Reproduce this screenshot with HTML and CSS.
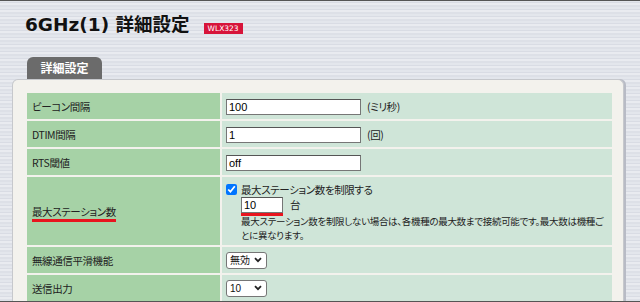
FILE: index.html
```html
<!DOCTYPE html>
<html lang="ja">

<head>
    <meta charset="UTF-8">
    <meta name="viewport" content="width=device-width, initial-scale=1.0">
    <title>6GHz(1) 詳細設定</title>
    <link rel="stylesheet" href="styles.css">
</head>

<body>
    <div class="page">
        <h1 class="title">6GHz(1) 詳細設定 <span class="model">WLX323</span></h1>

        <div class="tabs">
            <span class="tab">詳細設定</span>
        </div>

        <div class="panel">
            <table class="settings">
                <tr>
                    <td class="label">ビーコン間隔</td>
                    <td class="value"><input type="text" class="text" value="100"><span class="unit">(ミリ秒)</span></td>
                </tr>
                <tr>
                    <td class="label">DTIM間隔</td>
                    <td class="value"><input type="text" class="text" value="1"><span class="unit">(回)</span></td>
                </tr>
                <tr>
                    <td class="label">RTS閾値</td>
                    <td class="value"><input type="text" class="text" value="off"></td>
                </tr>
                <tr>
                    <td class="label"><span class="mark">最大ステーション数</span></td>
                    <td class="value value-stack">
                        <label class="check"><input type="checkbox" checked>最大ステーション数を制限する</label>
                        <div class="sub">
                            <div class="count">
                                <span class="mark-input"><input type="text" class="num" value="10"></span>
                                <span>台</span>
                            </div>
                            <p class="note">最大ステーション数を制限しない場合は、各機種の最大数まで接続可能です。最大数は機種ごとに異なります。</p>
                        </div>
                    </td>
                </tr>
                <tr>
                    <td class="label">無線通信平滑機能</td>
                    <td class="value">
                        <select class="pick">
                            <option>無効</option>
                            <option>有効</option>
                        </select>
                    </td>
                </tr>
                <tr>
                    <td class="label">送信出力</td>
                    <td class="value">
                        <select class="pick">
                            <option>10</option>
                            <option>100</option>
                        </select>
                    </td>
                </tr>
            </table>
        </div>
    </div>
</body>

</html>
```

FILE: styles.css
```css
body {
    margin: 0;
    font-family: "Noto Sans CJK JP", sans-serif;
    font-feature-settings: "palt";
    color: #222;
    background-color: #e0e3ea;
    background-image: repeating-linear-gradient(to bottom,
            #e3e6ec 0, #e3e6ec 2px,
            #d9dce4 2px, #d9dce4 3px,
            #e9ebf0 3px, #e9ebf0 5px,
            #dde0e7 5px, #dde0e7 7px);
    height: 100vh;
    overflow: hidden;
}

/* thin frame of the capture */
body::after {
    content: "";
    position: fixed;
    top: 0;
    left: 0;
    right: 0;
    bottom: 0;
    border-top: 1px solid #555;
    border-bottom: 1px solid #555;
    pointer-events: none;
}

.page {
    padding: 13px 16px 0 12px;
}

.title {
    display: flex;
    align-items: baseline;
    gap: 14px;
    margin: 0 0 0 13px;
    font-family: "DejaVu Sans", "Noto Sans CJK JP", sans-serif;
    font-size: 18.5px;
    line-height: 24px;
    font-weight: bold;
    color: #111;
}

.model {
    display: inline-block;
    padding: 0 4px;
    background-color: #d7143a;
    color: #fff;
    font-family: "DejaVu Sans", sans-serif;
    font-size: 7.5px;
    line-height: 11px;
    font-weight: normal;
}

.tabs {
    display: flex;
    margin-top: 20px;
    padding-left: 15px;
}

.tab {
    width: 75px;
    height: 22px;
    line-height: 22px;
    text-align: center;
    background-color: #6b6b6b;
    color: #fff;
    font-size: 12px;
    font-weight: bold;
    border-radius: 6px 6px 0 0;
}

.panel {
    background-color: #f3f2ed;
    border: 1px solid #c6c8cc;
    border-bottom: none;
    border-radius: 6px 6px 0 0;
    box-shadow: 2px 0 0 #b8bbc5;
    padding: 11px 9px 0 12px;
}

.settings {
    width: 100%;
    table-layout: fixed;
    border-collapse: separate;
    border-spacing: 2px;
    font-size: 10.5px;
    letter-spacing: -0.4px;
}

.label {
    width: 183px;
    height: 26px;
    padding: 0 5px;
    background-color: #a6d2a6;
    vertical-align: middle;
}

.value {
    height: 26px;
    padding: 0 4px;
    background-color: #cfe5d8;
    vertical-align: middle;
}

.value-stack {
    padding: 4px 4px 3px 4px;
    vertical-align: top;
}

.mark {
    border-bottom: 3px solid #e8141e;
}

.text {
    box-sizing: border-box;
    width: 135px;
    height: 16px;
    padding: 0 2px;
    border: 1px solid #767676;
    border-top-color: #555;
    font-family: "Liberation Sans", sans-serif;
    font-size: 11px;
    vertical-align: middle;
}

.unit {
    margin-left: 6px;
    vertical-align: middle;
}

.check {
    display: flex;
    align-items: center;
    gap: 4px;
    height: 16px;
}

.check input {
    width: 11px;
    height: 11px;
    margin: 0;
}

.sub {
    padding-left: 15px;
}

.count {
    display: flex;
    align-items: flex-start;
    gap: 7px;
    line-height: 16px;
}

.mark-input {
    display: block;
    border-bottom: 3px solid #e8141e;
}

.num {
    display: block;
    box-sizing: border-box;
    width: 42px;
    height: 16px;
    padding: 0 2px;
    border: 1px solid #767676;
    border-top-color: #555;
    font-family: "Liberation Sans", sans-serif;
    font-size: 11px;
}

.note {
    margin: -2px 0 0 0;
    padding-right: 4px;
    font-size: 9.5px;
    line-height: 14px;
    letter-spacing: -0.3px;
}

.pick {
    appearance: none;
    box-sizing: border-box;
    width: 41px;
    height: 17px;
    padding: 0 0 0 3px;
    border: 1px solid #767676;
    border-radius: 3px;
    background: #fff url("data:image/svg+xml,%3Csvg xmlns='http://www.w3.org/2000/svg' width='8' height='6'%3E%3Cpath d='M1 1.2l3 3 3-3' fill='none' stroke='%23222' stroke-width='1.8'/%3E%3C/svg%3E") no-repeat right 4px center;
    color: #111;
    font-family: "Liberation Sans", "Noto Sans CJK JP", sans-serif;
    font-size: 10px;
    vertical-align: middle;
}
```
